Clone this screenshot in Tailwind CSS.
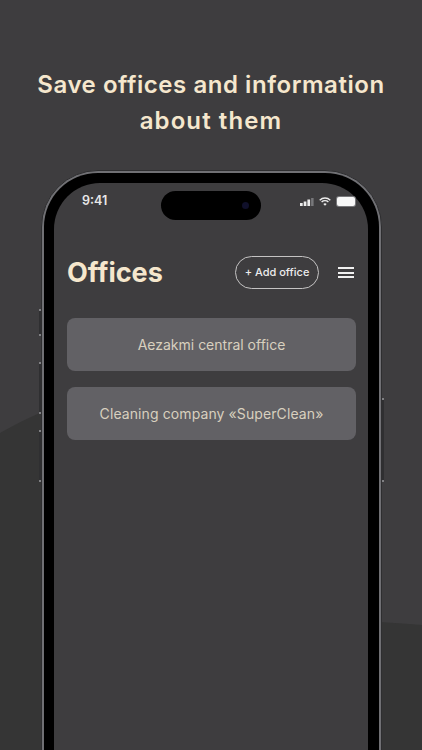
<!DOCTYPE html>
<html lang="en">
<head>
    <meta charset="UTF-8">
    <meta name="viewport" content="width=device-width, initial-scale=1.0">
    <title>Offices</title>
    <script src="https://cdn.jsdelivr.net/npm/@tailwindcss/browser@4"></script>
</head>
<body class="bg-[#3e3d3f] font-['Inter',sans-serif]">

    <div class="relative w-[422px] h-[750px] overflow-hidden">
        <!-- Darker hill behind the phone -->
        <svg class="absolute left-0 top-0" width="422" height="750" viewBox="0 0 422 750">
            <path d="M0 433 C14 425 28 418 42 412 L380 622 C395 623 410 624 422 625 L422 750 L0 750 Z" fill="#353535"/>
        </svg>

        <div class="relative">
            <!-- Title -->
            <h1 class="pt-[67px] text-center text-[24px] leading-[35.5px] font-semibold tracking-[0.55px] text-[#f5e7cd]">
                Save offices and information<br><span class="tracking-[1.1px]">about them</span>
            </h1>

            <!-- Phone -->
            <div class="relative ml-[41px] mt-[32px] w-[341px] h-[640px] rounded-[57px] border border-[#2e2e30] bg-[#707074] p-[2px]">
                <!-- Side buttons -->
                <div class="absolute left-[-3px] top-[138px] w-[2px] h-[27px] bg-[#2f2f31] border-y-2 border-[#808083]"></div>
                <div class="absolute left-[-3px] top-[191px] w-[2px] h-[52px] bg-[#2f2f31] border-y-2 border-[#808083]"></div>
                <div class="absolute left-[-3px] top-[259px] w-[2px] h-[52px] bg-[#2f2f31] border-y-2 border-[#808083]"></div>
                <div class="absolute right-[-3px] top-[227px] w-[2px] h-[84px] bg-[#2f2f31] border-y-2 border-[#808083]"></div>

                <!-- Bezel -->
                <div class="h-full rounded-[54px] bg-black pl-[10px] pt-[10px]">
                    <!-- Screen -->
                    <div class="w-[314px] h-[620px] rounded-[46px] bg-[#3e3d3f]">
                        <!-- Status bar -->
                        <div class="relative flex items-center h-[37px] pl-[28px]">
                            <span class="text-[12.5px] font-semibold text-[#e8e8e8]">9:41</span>
                            <div class="absolute left-[107px] top-[8px] w-[100px] h-[29px] rounded-full bg-black">
                                <div class="absolute right-[12px] top-[11px] w-[7px] h-[7px] rounded-full bg-[#10102a]"></div>
                            </div>
                            <div class="ml-auto mr-[13px] flex items-center gap-[6px]">
                                <svg class="mr-[-1px]" width="14" height="8" viewBox="0 0 14 8">
                                    <rect x="0" y="5" width="2.7" height="3" fill="#ececec"/>
                                    <rect x="3.7" y="3.5" width="2.7" height="4.5" fill="#ececec"/>
                                    <rect x="7.4" y="1.5" width="2.7" height="6.5" fill="#ececec"/>
                                    <rect x="11.1" y="0" width="2.5" height="8" fill="#77777a"/>
                                </svg>
                                <svg width="12" height="9" viewBox="0 0 12 9" fill="none" stroke="#ececec" stroke-width="1.4">
                                    <path d="M0.7 3.2C3.7 0.3 8.3 0.3 11.3 3.2"/>
                                    <path d="M2.6 5C4.5 3.3 7.5 3.3 9.4 5"/>
                                    <path d="M6 8.8L4.3 6.9C5.3 6.1 6.7 6.1 7.7 6.9Z" fill="#ececec" stroke="none"/>
                                </svg>
                                <div class="w-[18px] h-[9px] rounded-[2px] bg-[#f8f8f8] ring-1 ring-[#77777a]"></div>
                            </div>
                        </div>

                        <!-- Header -->
                        <div class="flex items-center mt-[36px] pl-[13px] pr-[14px]">
                            <h2 class="text-[27px] leading-[33px] font-bold text-[#f5e7cd]">Offices</h2>
                            <button class="ml-auto flex items-center justify-center w-[84px] h-[33px] rounded-full border-[1.5px] border-[#c4c3c3] text-[11px] font-medium text-[#ececec]">+ Add office</button>
                            <div class="ml-[19px] flex flex-col gap-[2.5px] w-[16px]">
                                <div class="h-[2px] bg-[#f0f0f0]"></div>
                                <div class="h-[2px] bg-[#f0f0f0]"></div>
                                <div class="h-[2px] bg-[#f0f0f0]"></div>
                            </div>
                        </div>

                        <!-- Office list -->
                        <div class="flex flex-col gap-[16px] mt-[29px] pl-[13px] pr-[12px]">
                            <div class="flex items-center justify-center h-[53px] rounded-[8px] bg-[#626165] text-[14px] text-[#d8d0bf]">Aezakmi central office</div>
                            <div class="flex items-center justify-center h-[53px] rounded-[8px] bg-[#626165] text-[14px] tracking-[0.1px] text-[#d8d0bf]">Cleaning company «SuperClean»</div>
                        </div>
                    </div>
                </div>
            </div>
        </div>
    </div>

</body>
</html>
